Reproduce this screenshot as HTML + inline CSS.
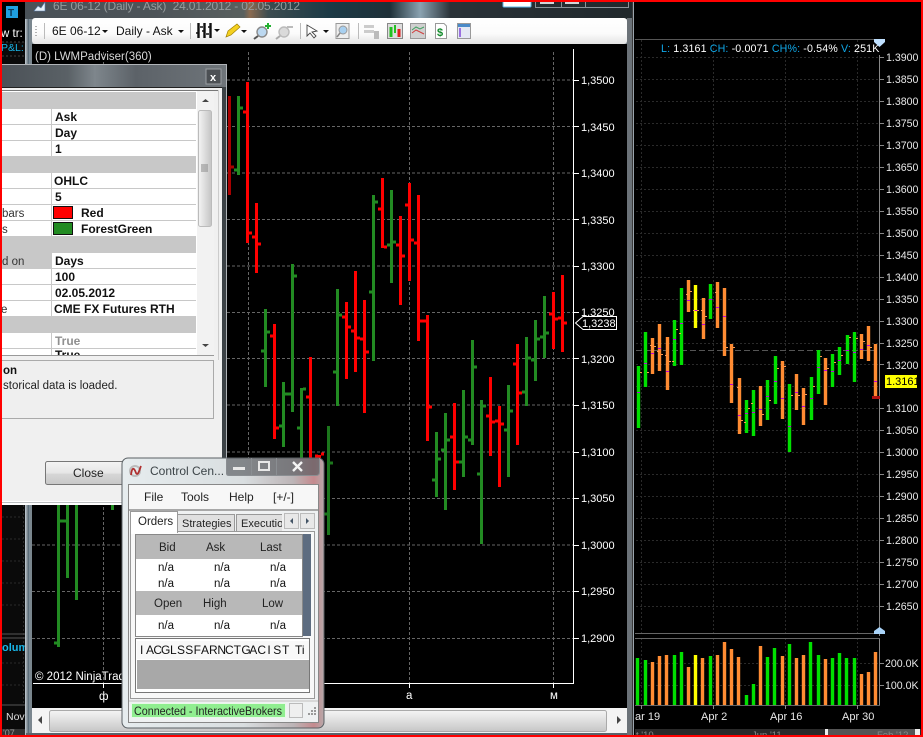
<!DOCTYPE html>
<html><head><meta charset="utf-8"><style>
html,body{margin:0;padding:0;background:#000;width:923px;height:737px;overflow:hidden}
svg{display:block;font-family:"Liberation Sans",Arial,sans-serif}
text{white-space:pre}
.ax{fill:#fff;font-size:11px}
.rx{fill:#e8e8e8;font-size:10.6px}
.b{font-weight:bold;font-size:12px;fill:#111}
.m{font-size:12px;fill:#222}
</style></head><body>
<svg width="923" height="737" viewBox="0 0 923 737" xmlns="http://www.w3.org/2000/svg">
<defs>
<linearGradient id="title" x1="0" x2="1" y1="0" y2="0"><stop offset="0" stop-color="#4a5258"/><stop offset=".2" stop-color="#4c5358"/><stop offset=".36" stop-color="#59605f"/><stop offset=".37" stop-color="#8a6a50"/><stop offset=".4" stop-color="#3c4c50"/><stop offset=".5" stop-color="#1c3a46"/><stop offset=".6" stop-color="#1e3038"/><stop offset=".65" stop-color="#8aa2b0"/><stop offset=".7" stop-color="#2a3238"/><stop offset="1" stop-color="#20282c"/></linearGradient>
<linearGradient id="tb" x1="0" x2="0" y1="0" y2="1"><stop offset="0" stop-color="#fff"/><stop offset=".6" stop-color="#fbfbfb"/><stop offset="1" stop-color="#e4e4e4"/></linearGradient>
<linearGradient id="scr" x1="0" x2="0" y1="0" y2="1"><stop offset="0" stop-color="#f4f4f4"/><stop offset=".5" stop-color="#dedede"/><stop offset="1" stop-color="#c6c6c6"/></linearGradient>
<linearGradient id="vs" x1="0" x2="1" y1="0" y2="0"><stop offset="0" stop-color="#f4f4f4"/><stop offset="1" stop-color="#c4c4c4"/></linearGradient>
<linearGradient id="dt" x1="0" x2="1" y1="0" y2="0"><stop offset="0" stop-color="#4b5157"/><stop offset=".3" stop-color="#5a6166"/><stop offset=".42" stop-color="#7e868c"/><stop offset=".6" stop-color="#5c6268"/><stop offset="1" stop-color="#6f757a"/></linearGradient>
<linearGradient id="cc" x1="0" x2="1" y1="0" y2="0"><stop offset="0" stop-color="#e6ecee"/><stop offset=".6" stop-color="#d9dee0"/><stop offset=".85" stop-color="#bcb4b6"/><stop offset=".95" stop-color="#c58a8e"/><stop offset="1" stop-color="#b8a8aa"/></linearGradient>
<linearGradient id="btn" x1="0" x2="0" y1="0" y2="1"><stop offset="0" stop-color="#f4f4f4"/><stop offset=".5" stop-color="#e6e6e6"/><stop offset=".55" stop-color="#d6d6d6"/><stop offset="1" stop-color="#c8c8c8"/></linearGradient>
<linearGradient id="sf" x1="0" x2="1" y1="0" y2="0"><stop offset="0" stop-color="#7f97a8"/><stop offset=".4" stop-color="#3a4c58"/><stop offset="1" stop-color="#a9bac6"/></linearGradient>
</defs>

<rect width="923" height="737" fill="#000"/>

<!-- far-left background window -->
<rect x="2" y="2" width="24" height="733" fill="#0a0a0a"/>
<rect x="2" y="2" width="24" height="40" fill="#000"/>
<rect x="6" y="6" width="12" height="12" fill="#1f9fe0"/>
<text x="8" y="16" font-size="10" font-weight="bold" fill="#0a3a5a">T</text>
<text x="1" y="37" font-size="11.5" fill="#fff">w tr:</text>
<text x="1" y="51" font-size="10.5" fill="#19b6e8">P&amp;L:</text>
<path d="M2 42H25M2 56H25" stroke="#444" stroke-dasharray="2 2"/>
<path d="M2 517H23M2 539H23M2 561H23M2 583H23M2 605H23M2 663H23M2 685H23M23.5 505V705" stroke="#2a2a2a" stroke-dasharray="2 2"/>
<path d="M2 634H25M2 638H25M2 705H25" stroke="#555"/>
<text x="2" y="651" font-size="11" font-weight="bold" fill="#19b6e8">olum</text>
<rect x="25" y="640" width="6" height="16" fill="#3a8ab8" opacity=".6"/>
<text x="6" y="720" font-size="10.5" fill="#ddd">Nov</text>
<rect x="2" y="729" width="24" height="6" fill="#333"/>
<text x="3" y="736" font-size="9" fill="#999">'07</text>

<!-- right chart -->
<rect x="633" y="2" width="288" height="733" fill="#000"/>
<path d="M633.5 0V737" stroke="#9aa4ac" stroke-width="1"/>
<path d="M635 39.5H877" stroke="#555"/>
<g stroke="#2a2a2a" stroke-dasharray="2 2" fill="none">
<path d="M636 57.5H879M636 79.5H879M636 101.5H879M636 123.5H879M636 145.5H879M636 167.5H879M636 189.5H879M636 211.5H879M636 233.5H879M636 255.5H879M636 277.5H879M636 299.5H879M636 321.5H879M636 343.5H879M636 364.5H879M636 386.5H879M636 408.5H879M636 430.5H879M636 452.5H879M636 474.5H879M636 496.5H879M636 518.5H879M636 540.5H879M636 562.5H879M636 584.5H879M636 606.5H879"/>
<path d="M641.5 40V633M713.5 40V633M785.5 40V633M857.5 40V633M641.5 638V705M713.5 638V705M785.5 638V705M857.5 638V705M636 663.5H879M636 685.5H879"/>
</g>
<path d="M636 350.5H876" stroke="#555" stroke-dasharray="6 3"/>
<text x="661" y="52" font-size="10.7" fill="#fff" letter-spacing=".12"><tspan fill="#0fa8e8">L:</tspan> 1.3161 <tspan fill="#0fa8e8">CH:</tspan> -0.0071 <tspan fill="#0fa8e8">CH%:</tspan> -0.54% <tspan fill="#0fa8e8">V:</tspan> 251K</text>
<path d="M874 39H885V42L879.5 47L874 42Z" fill="#bfe0ff"/>
<path d="M879.5 55V636M879.5 638V705" stroke="#888"/>
<path d="M635 633.5H880M635 638.5H880M635 705.5H880" stroke="#666"/>
<path d="M874 634H885V631L879.5 627L874 631Z" fill="#a9d3f8"/>
<g class="rx">
<text class="rx" x="886" y="61">1.3900</text><text class="rx" x="886" y="83">1.3850</text><text class="rx" x="886" y="105">1.3800</text><text class="rx" x="886" y="127">1.3750</text><text class="rx" x="886" y="149">1.3700</text><text class="rx" x="886" y="171">1.3650</text><text class="rx" x="886" y="193">1.3600</text><text class="rx" x="886" y="215">1.3550</text><text class="rx" x="886" y="237">1.3500</text><text class="rx" x="886" y="259">1.3450</text><text class="rx" x="886" y="281">1.3400</text><text class="rx" x="886" y="303">1.3350</text><text class="rx" x="886" y="325">1.3300</text><text class="rx" x="886" y="347">1.3250</text><text class="rx" x="886" y="369">1.3200</text><text class="rx" x="886" y="412">1.3100</text><text class="rx" x="886" y="434">1.3050</text><text class="rx" x="886" y="456">1.3000</text><text class="rx" x="886" y="478">1.2950</text><text class="rx" x="886" y="500">1.2900</text><text class="rx" x="886" y="522">1.2850</text><text class="rx" x="886" y="544">1.2800</text><text class="rx" x="886" y="566">1.2750</text><text class="rx" x="886" y="588">1.2700</text><text class="rx" x="886" y="610">1.2650</text>
<text class="rx" x="885" y="667">200.0K</text><text class="rx" x="885" y="689">100.0K</text>
</g>
<path d="M880 57.5h4M880 79.5h4M880 101.5h4M880 123.5h4M880 145.5h4M880 167.5h4M880 189.5h4M880 211.5h4M880 233.5h4M880 255.5h4M880 277.5h4M880 299.5h4M880 321.5h4M880 343.5h4M880 364.5h4M880 408.5h4M880 430.5h4M880 452.5h4M880 474.5h4M880 496.5h4M880 518.5h4M880 540.5h4M880 562.5h4M880 584.5h4M880 606.5h4M880 663.5h4M880 685.5h4" stroke="#888"/>
<!-- right green -->
<path fill="none" stroke="#00e000" stroke-width="3.4" d="M638.5 366V428M645.5 332V387M674.5 320V366M681.5 288V365M710.5 284V319M746.5 400V433M753.5 390V436M767.5 380V420M775.5 356V404M789.5 384V452M811.5 377V420M818.5 350V394M832.5 354V387M839.5 347V375M847.5 335V364M854.5 332V382"/>
<path fill="none" stroke="#ff8c33" stroke-width="3.4" d="M652.5 338V374M659.5 324V371M667.5 337V390M688.5 280V312M703.5 298V339M717.5 282V328M724.5 288V356M731.5 344V403M739.5 378V434M760.5 386V426M782.5 361V419M796.5 374V410M803.5 388V425M825.5 358V405M861.5 334V359M868.5 326V361M875.5 344V397"/>
<path fill="none" stroke="#ffff00" stroke-width="3.4" d="M695.5 285V328"/>
<path fill="none" stroke="#c000e0" stroke-width="1" d="M637 392.5h3M644 363.5h3M651 353.5h3M658 348.5h3M666 371.5h3M673 339.5h3M680 323.5h3M687 300.5h3M694 310.5h3M702 324.5h3M709 299.5h3M716 307.5h3M723 316.5h3M730 384.5h3M738 415.5h3M745 413.5h3M752 412.5h3M759 409.5h3M766 396.5h3M774 381.5h3M781 398.5h3M788 426.5h3M795 392.5h3M802 406.5h3M810 398.5h3M817 367.5h3M824 370.5h3M831 371.5h3M838 360.5h3M846 350.5h3M853 352.5h3M860 349.5h3M867 345.5h3M874 381.5h3"/>
<path fill="none" stroke="#ff9a50" stroke-width="1" d="M640 372.5h2M647 372.5h2M650 345.5h2M654 346.5h2M657 351.5h2M661 354.5h2M665 355.5h2M669 361.5h2M672 361.5h2M676 329.5h2M679 333.5h2M686 294.5h2M690 291.5h2M693 310.5h2M697 310.5h2M701 310.5h2M705 316.5h2M715 292.5h2M723 341.5h2M726 347.5h2M733 347.5h2M737 387.5h2M741 420.5h2M744 422.5h2M748 408.5h2M751 403.5h2M762 414.5h2M769 400.5h2M777 368.5h2M784 366.5h2M791 395.5h2M798 395.5h2M805 394.5h2M813 386.5h2M820 356.5h2M827 368.5h2M834 362.5h2M841 355.5h2M849 337.5h2M856 338.5h2M863 341.5h2M870 347.5h2"/>
<rect x="872" y="396" width="8" height="3" fill="#b01010"/>
<rect x="885" y="375" width="32" height="13" fill="#ffff00"/>
<text x="886" y="385" font-size="11" fill="#000">1.3161</text>
<!-- volume -->
<path fill="none" stroke="#00e000" stroke-width="3.4" d="M637.500 658V705M645.500 660V705M674.500 655V705M681.500 652V705M710.500 656V705M746.500 695V705M753.500 684V705M767.500 657V705M774.500 648V705M789.500 644V705M810.500 642V705M818.500 655V705M832.500 658V705M839.500 653V705M846.500 658V705M854.500 658V705"/>
<path fill="none" stroke="#ff8c33" stroke-width="3.4" d="M652.500 662V705M659.500 656V705M666.500 655V705M688.500 667V705M702.500 658V705M717.500 655V705M724.500 642V705M731.500 649V705M738.500 657V705M760.500 646V705M782.500 656V705M796.500 658V705M803.500 655V705M825.500 659V705M861.500 674V705M868.500 672V705M875.500 652V705"/>
<path fill="none" stroke="#ffff00" stroke-width="3.4" d="M695.500 655V705"/>
<path d="M641.5 705v4M713.5 705v4M785.5 705v4M857.5 705v4" stroke="#888"/>
<g font-size="11" fill="#e8e8e8"><text x="635" y="720">ar 19</text><text x="701" y="720">Apr 2</text><text x="770" y="720">Apr 16</text><text x="842" y="720">Apr 30</text></g>
<rect x="635" y="729" width="286" height="6" fill="#2a2a2a"/>
<rect x="828" y="729" width="87" height="6" fill="#555"/>
<rect x="825" y="729" width="3" height="6" fill="#eee"/><rect x="915" y="729" width="5" height="6" fill="#eee"/>
<g font-size="9.5" fill="#888"><text x="636" y="738">t '10</text><text x="752" y="738">Jun '11</text><text x="877" y="738">Feb '12</text></g>

<!-- main window frame -->
<rect x="25" y="2" width="608" height="735" fill="#7a868e"/>
<rect x="25" y="0" width="1.5" height="737" fill="#b5c0c8"/>
<rect x="28" y="0" width="2" height="737" fill="url(#sf)" opacity=".8"/>
<rect x="25" y="2" width="608" height="17" fill="url(#title)"/>
<rect x="627" y="18" width="6" height="719" fill="#6b7278"/>
<rect x="632" y="2" width="1" height="735" fill="#3a3a3a"/>
<text x="53" y="10" font-size="12" fill="#969c9e" textLength="247">6E 06-12 (Daily - Ask)  24.01.2012 - 02.05.2012</text>
<path d="M34 11L38 6L41 8L45 2V11Z" fill="#e6f0f8" stroke="#5a7fb0" stroke-width=".6"/>
<rect x="503" y="-1" width="28" height="8" rx="1" fill="#fff" stroke="#5fb8e8"/>
<path d="M535.500 -1V7.500H628.500V-1M561.500 0V7M585.500 0V7" fill="none" stroke="#8a9298"/>
<rect x="540" y="1" width="14" height="3" fill="#d0d4d8"/><rect x="565" y="1" width="14" height="3" fill="#d0d4d8"/>
<!-- chart pane -->
<rect x="32" y="44" width="595" height="665" fill="#000"/>
<!-- grid -->
<g stroke="#666" stroke-dasharray="3 2" fill="none">
<path d="M32 80H573M32 126.5H573M32 173H573M32 219.5H573M32 266H573M32 312.5H573M32 358.5H573M32 405H573M32 452H573M32 498.5H573M32 545H573M32 591.5H573M32 638.5H573"/>
<path d="M103.5 52V683M248.5 52V683M409.5 52V683M553.5 52V683"/>
</g>
<!-- bars -->
<path fill="none" stroke="#228b22" stroke-width="3" d="M238.5 96V175M234 170h3M240 108h3M265.5 309V387M261 351h3M267 332h3M283.5 382V447M279 426h3M285 394h3M292.5 264V412M288 394h3M294 276h3M301.5 388V458M297 428h3M303 389h3M337.5 289V406M333 372h3M339 315h3M373.5 195V361M369 292h3M375 202h3M391.5 190V283M387 245h3M393 242h3M436.5 432V497M432 480h3M438 459h3M445.5 413V510M441 450h3M447 440h3M463.5 390V477M459 462h3M465 437h3M472.5 340V445M468 440h3M474 367h3M481.5 400V544M477 474h3M483 406h3M508.5 385V477M504 430h3M510 411h3M526.5 337V406M522 392h3M528 358h3M535.5 320V381M531 360h3M537 339h3M544.5 296V358M540 337h3M546 333h3M58.5 503V647M54 643h3M67.5 503V578M60 521h6M76.5 503V600M112.5 503V510"/>
<path fill="none" stroke="#1c761c" stroke-width="3" d="M328.5 426V535M330 463h3M324 514h3"/>
<path fill="none" stroke="#ff0000" stroke-width="3" d="M247.5 82V243M243 112h3M249 233h3M256.5 203V273M252 237h3M258 244h3M274.5 324V439M270 336h3M276 428h3M310.5 357V458M306 397h3M319.5 455V458M315 456h3M321 454h3M346.5 302V379M342 317h3M348 327h3M355.5 271V372M351 331h3M357 338h3M364.5 300V413M360 339h3M366 352h3M382.5 178V248M378 209h3M384 247h3M400.5 216V305M396 245h3M402 256h3M409.5 183V281M405 205h3M411 240h3M418.5 195V341M414 243h3M420 321h3M427.5 315V441M423 321h3M429 407h3M454.5 403V490M450 437h3M456 462h3M490.5 377V456M486 416h3M492 422h3M499.5 406V487M495 421h3M501 424h3M517.5 344V445M513 364h3M519 393h3M553.5 292V349M549 314h3M555 319h3M562.5 275V352M558 318h3M564 323h3"/>
<path fill="none" stroke="#a80000" stroke-width="3" d="M229.5 96V195M231 167h3"/>
<!-- axes -->
<path d="M573.5 49V683.5H33" stroke="#fff" fill="none"/>
<path d="M573 80.5h6M573 126.5h6M573 173.5h6M573 219.5h6M573 266.5h6M573 312.5h6M573 358.5h6M573 405.5h6M573 452.5h6M573 498.5h6M573 545.5h6M573 591.5h6M573 638.5h6M103.5 683v5M248.5 683v5M409.5 683v5M553.5 683v5" stroke="#fff"/>
<g>
<text class="ax" x="581" y="84">1,3500</text><text class="ax" x="581" y="131">1,3450</text><text class="ax" x="581" y="177">1,3400</text><text class="ax" x="581" y="224">1,3350</text><text class="ax" x="581" y="270">1,3300</text><text class="ax" x="581" y="316">1,3250</text><text class="ax" x="581" y="363">1,3200</text><text class="ax" x="581" y="409">1,3150</text><text class="ax" x="581" y="456">1,3100</text><text class="ax" x="581" y="502">1,3050</text><text class="ax" x="581" y="549">1,3000</text><text class="ax" x="581" y="595">1,2950</text><text class="ax" x="581" y="642">1,2900</text>
</g>
<path d="M583 316.5H616.5V329.5H583L575.5 323Z" fill="#000" stroke="#fff"/>
<text class="ax" x="582" y="327">1,3238</text>
<text x="35" y="60" font-size="11.5" fill="#d8d8d8">(D) LWMPadviser(360)</text>
<text x="35" y="680" font-size="11.5" fill="#fff">© 2012 NinjaTrader</text>
<g font-size="11.5" fill="#fff"><text x="99" y="700">ф</text><text x="406" y="699">а</text><text x="550" y="699">м</text></g>

<!-- toolbar -->
<rect x="32" y="18" width="595" height="26" rx="3" fill="url(#tb)"/>
<path d="M36 26v1M36 29v1M36 32v1M36 35v1" stroke="#999" stroke-width="1.5"/>
<path d="M44.5 23V39M190.5 23V39M300.5 23V39M358.5 23V39" stroke="#bbb"/>
<text x="52" y="35" font-size="12" fill="#111">6E 06-12</text>
<path d="M102 30h6l-3 3z" fill="#111"/>
<text x="116" y="35" font-size="12" fill="#111">Daily - Ask</text>
<path d="M178 30h6l-3 3z" fill="#111"/>
<path d="M198.5 23V38M204.5 23V38M210.5 23V38" stroke="#111" stroke-width="2.4"/>
<path d="M196 33h3M200 27h3M202 31h3M206 34h3M208 27h3" stroke="#111" stroke-width="1.6"/>
<path d="M214 29h6l-3 3z" fill="#111"/>
<path d="M226 37L228 31L237 24L240 27L231 35Z" fill="#f4d020" stroke="#a08000" stroke-width=".7"/>
<path d="M241 30h6l-3 3z" fill="#111"/>
<circle cx="262" cy="32" r="5" fill="#bcd8f0" stroke="#8a8a8a" stroke-width="1.4"/>
<path d="M258 36L254 39" stroke="#555" stroke-width="2"/>
<path d="M265 26h6M268 23v6" stroke="#22b030" stroke-width="2"/>
<circle cx="284" cy="32" r="5" fill="#dadada" stroke="#bbb" stroke-width="1.4"/>
<path d="M280 36L276 39" stroke="#aaa" stroke-width="2"/>
<path d="M287 27h6" stroke="#bbb" stroke-width="2"/>
<path d="M307 25L307 36L310 33L314 38L316 36L312 32L317 31Z" fill="#fff" stroke="#444" stroke-width=".9"/>
<path d="M323 30h6l-3 3z" fill="#111"/>
<rect x="336" y="23.5" width="13" height="15" fill="#eee" stroke="#999"/>
<circle cx="343" cy="30" r="4" fill="#a8d0f0" stroke="#999"/>
<path d="M340 33L337 37" stroke="#888" stroke-width="1.5"/>
<path d="M364 25h10v3h-10zM364 30h10v3h-10z" fill="#ccc"/><rect x="374" y="31" width="5" height="8" fill="#bbb"/>
<rect x="387.5" y="23.5" width="15" height="15" fill="#ddd" stroke="#888"/>
<path d="M391 27V37" stroke="#22c020" stroke-width="3"/><path d="M395 25V33" stroke="#22c020" stroke-width="2"/><path d="M399 29V37" stroke="#e02020" stroke-width="3"/>
<rect x="410.5" y="23.5" width="15" height="15" fill="#d0d0d0" stroke="#999"/>
<path d="M412 30L416 27L420 29L424 27" stroke="#40a060" fill="none"/><path d="M412 33L416 30L420 32L424 34" stroke="#d04040" fill="none"/>
<path d="M435.5 23.5H444L446.5 26V38.5H435.5Z" fill="#fff" stroke="#999"/>
<text x="437" y="36" font-size="11" font-weight="bold" fill="#118a2a">$</text>
<rect x="457.5" y="23.5" width="13" height="15" fill="#e4e8f4" stroke="#999"/>
<rect x="458" y="24" width="12" height="3" fill="#4a8ac8"/><rect x="459" y="28" width="2" height="9" fill="#9a70e0"/>

<!-- horizontal scrollbar -->
<rect x="32" y="708" width="595" height="25" fill="#f4f4f4"/>
<path d="M42 716v8l-4-4z" fill="#444"/>
<path d="M617 716v8l4-4z" fill="#444"/>
<rect x="49.5" y="710.5" width="557" height="21" rx="2" fill="url(#scr)" stroke="#aaa"/>
<rect x="26" y="733" width="601" height="2" fill="#5a646c"/>

<!-- dialog -->
<rect x="0" y="64" width="226" height="440" fill="#777d82"/>
<rect x="0" y="64" width="226" height="23" fill="url(#dt)"/>
<path d="M0 64.5H226.5V503" stroke="#b0b4b8" fill="none"/>
<rect x="206" y="69" width="15" height="15" fill="#4c5054" stroke="#9a9ea2"/>
<text x="210" y="81" font-size="11" font-weight="bold" fill="#fff">x</text>
<rect x="0" y="87" width="222" height="1" fill="#222"/>
<rect x="0" y="88" width="222" height="413" fill="#f0f0f0"/>
<rect x="222" y="87" width="4" height="416" fill="#3c4246"/>
<rect x="0" y="90" width="219" height="1" fill="#777"/>
<rect x="218" y="90" width="1" height="270" fill="#ccc"/>
<rect x="0" y="91" width="198" height="264" fill="#fff"/>
<g fill="#c8c8c8">
<rect x="0" y="92" width="196" height="16"/><rect x="0" y="157" width="196" height="15"/><rect x="0" y="237" width="196" height="16"/><rect x="0" y="317" width="196" height="15"/><rect x="0" y="253" width="51" height="15"/>
</g>
<path d="M0 108.5H196M0 124.5H196M0 140.5H196M0 156.5H196M0 172.5H196M0 188.5H196M0 204.5H196M0 220.5H196M0 236.5H196M0 252.5H196M0 268.5H196M0 284.5H196M0 300.5H196M0 316.5H196M0 332.5H196M0 348.5H196" stroke="#c8c8c8"/>
<path d="M51.5 108V156M51.5 172V236M51.5 252V316M51.5 332V355" stroke="#c8c8c8"/>
<rect x="197" y="91" width="17" height="264" fill="#f2f2f2"/>
<rect x="198.5" y="110.5" width="13" height="116" rx="2" fill="url(#vs)" stroke="#bbb"/>
<path d="M201 165h7M201 167h7M201 169h7M201 171h7" stroke="#888"/>
<path d="M202 102h7l-3.500-3z" fill="#444"/><path d="M202 344h7l-3.500 3z" fill="#444"/>
<g class="b">
<text class="b" x="55" y="121">Ask</text><text class="b" x="55" y="137">Day</text><text class="b" x="55" y="153">1</text><text class="b" x="54" y="185">OHLC</text><text class="b" x="55" y="201">5</text>
<text class="b" x="81" y="217">Red</text><text class="b" x="81" y="233">ForestGreen</text>
<text class="b" x="55" y="265">Days</text><text class="b" x="55" y="281">100</text><text class="b" x="55" y="297">02.05.2012</text><text class="b" x="54" y="313">CME FX Futures RTH</text>
<text class="b" x="55" y="345" style="fill:#909090">True</text><text class="b" x="55" y="359">True</text>
</g>
<rect x="0" y="355" width="214" height="5" fill="#f0f0f0"/>
<rect x="0" y="355" width="214" height="1" fill="#999"/>
<rect x="53.500" y="206.500" width="19" height="12" fill="#ff0000" stroke="#111"/>
<rect x="53.500" y="222.500" width="19" height="12" fill="#228b22" stroke="#111"/>
<g font-size="11.5" fill="#333">
<text x="2" y="217">bars</text><text x="2" y="233">s</text><text x="2" y="265">d on</text><text x="1" y="313">e</text>
</g>
<rect x="0" y="360.500" width="213.500" height="58" fill="#efefef" stroke="#aaa"/>
<text x="3" y="374" font-size="11.500" font-weight="bold" fill="#111">on</text>
<text x="3" y="389" font-size="11.500" fill="#222">storical data is loaded.</text>
<rect x="45.500" y="461.500" width="85" height="23" rx="2" fill="url(#btn)" stroke="#777"/>
<text x="73" y="477" font-size="12" fill="#222">Close</text>
<rect x="0" y="501" width="226" height="1.500" fill="#fff"/>
<rect x="0" y="503" width="226" height="2" fill="#fff"/>

<!-- Control Center window -->
<rect x="122" y="458" width="202" height="270" rx="6" fill="url(#cc)" stroke="#5a6064"/>
<circle cx="135" cy="471" r="5" fill="none" stroke="#bbb" stroke-width="2"/>
<path d="M131 475C132 467 134 467 136 473C138 477 140 468 141 466" fill="none" stroke="#b03030" stroke-width="1.800"/>
<text x="150" y="475" font-size="12" fill="#3c4448">Control Cen...</text>
<path d="M226.500 458V473.500Q226.500 475.500 229 475.500H316Q319.500 475.500 319.500 472V458M251.500 458V475M276.500 458V475" fill="#55585c" fill-opacity=".65" stroke="#8a8e92"/>
<rect x="233" y="467" width="12" height="3" fill="#e8e8e8"/>
<rect x="259" y="462" width="10" height="8" fill="none" stroke="#e8e8e8" stroke-width="2"/>
<path d="M293 462L302 471M302 462L293 471" stroke="#f4f4f4" stroke-width="2.400"/>
<rect x="128.500" y="484.500" width="190" height="238" fill="#eff1f2" stroke="#888"/>
<rect x="129" y="485" width="189" height="24" fill="#f7f7f7"/>
<g class="m"><text class="m" x="144" y="501">File</text><text class="m" x="181" y="501">Tools</text><text class="m" x="229" y="501">Help</text><text class="m" x="273" y="501">[+/-]</text></g>
<rect x="129" y="509" width="189" height="2" fill="#a8a8a8"/>
<rect x="130.500" y="531.500" width="184" height="167" fill="#f8f8f8" stroke="#999"/>
<rect x="177.500" y="514.500" width="57" height="17" fill="#e0e0e0" stroke="#999"/>
<rect x="236.500" y="514.500" width="46" height="17" fill="#e0e0e0" stroke="#999"/>
<rect x="130.500" y="511.500" width="47" height="21" fill="#fff" stroke="#999"/>
<rect x="131" y="530" width="46" height="4" fill="#fff"/>
<rect x="284.500" y="513.500" width="14" height="15" fill="#e8e8e8" stroke="#bbb"/>
<rect x="300.500" y="513.500" width="14" height="15" fill="#e8e8e8" stroke="#bbb"/>
<path d="M293 518v6l-3-3z" fill="#456"/><path d="M306 518v6l3-3z" fill="#456"/>
<text x="138" y="525" font-size="11.500" fill="#222">Orders</text>
<text x="182" y="527" font-size="11" fill="#222">Strategies</text>
<text x="241" y="527" font-size="11" fill="#222">Executio</text>
<rect x="282" y="514" width="2" height="17" fill="#f0f0f0"/>
<rect x="135.500" y="534.500" width="167" height="102" fill="#fff" stroke="#888"/>
<rect x="136" y="535" width="166" height="24" fill="#b8b8b8"/>
<rect x="136" y="591" width="166" height="24" fill="#b8b8b8"/>
<rect x="303" y="534" width="8" height="102" fill="#5d6c80"/>
<g font-size="11.500" fill="#222">
<text x="159" y="551">Bid</text><text x="206" y="551">Ask</text><text x="260" y="551">Last</text>
<text x="154" y="607">Open</text><text x="203" y="607">High</text><text x="262" y="607">Low</text>
<g fill="#111"><text x="158" y="571">n/a</text><text x="214" y="571">n/a</text><text x="270" y="571">n/a</text>
<text x="158" y="587">n/a</text><text x="214" y="587">n/a</text><text x="270" y="587">n/a</text>
<text x="158" y="629">n/a</text><text x="214" y="629">n/a</text><text x="270" y="629">n/a</text></g>
</g>
<rect x="135.500" y="638.500" width="174" height="54" fill="#fff" stroke="#777"/>
<rect x="137" y="660" width="172" height="29" fill="#a8a8a8"/>
<rect x="137" y="641" width="172" height="18" fill="#f8f8f8"/>
<text y="654" font-size="12" fill="#111" text-anchor="middle" x="141.700 150 157.700 165.700 173.300 181 189.300 197.300 205 213.300 221.700 229.300 237.300 246 253.300 261.700 269 277.300 285.700">IACGLSSFARNCTGACIST</text>
<text x="295" y="654" font-size="12" fill="#111">Ti</text>
<rect x="129" y="700" width="189" height="2" fill="#d8d8d8"/>
<rect x="131.500" y="703.500" width="154" height="14" fill="#90ee90" stroke="#e8f8e8"/>
<text x="134" y="715" font-size="11.700" fill="#222" textLength="148" lengthAdjust="spacingAndGlyphs">Connected - InteractiveBrokers</text>
<rect x="289.500" y="703.500" width="13" height="14" fill="#efefef" stroke="#bbb"/>
<path d="M314 708h2M311 711h2M314 711h2M308 714h2M311 714h2M314 714h2" stroke="#999" stroke-width="2"/>

<!-- red frame -->
<path d="M0 0H923V2H2V735H921V2H923V737H0Z" fill="#ff0000"/>
</svg>
</body></html>
